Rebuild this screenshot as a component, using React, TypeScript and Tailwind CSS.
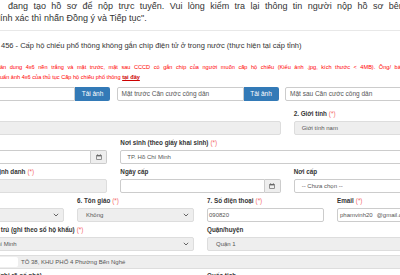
import type { ReactNode } from "react";
import clsx from "clsx";

function Req() {
  return <span className="ml-[2px] font-normal text-[#f46a6a]">(*)</span>;
}

function Label({ children, req }: { children?: ReactNode; req?: boolean }) {
  return (
    <div className="mb-[2px] h-[10px] whitespace-nowrap text-[6.3px] font-bold leading-[10px] text-[#333]">
      {children}
      {req && <Req />}
    </div>
  );
}

function Chevron() {
  return (
    <svg width="6" height="4" viewBox="0 0 6 4" className="shrink-0">
      <path d="M0.8 0.8 3 3 5.2 0.8" fill="none" stroke="#555" strokeWidth="0.9" />
    </svg>
  );
}

function Calendar() {
  return (
    <svg width="6" height="6" viewBox="0 0 6 6">
      <rect x="0.3" y="1" width="5.4" height="4.7" fill="#666" />
      <rect x="1" y="2.4" width="4" height="2.6" fill="#eee" />
      <rect x="1.3" y="0.2" width="0.8" height="1.4" fill="#666" />
      <rect x="3.9" y="0.2" width="0.8" height="1.4" fill="#666" />
    </svg>
  );
}

function Box({
  children,
  gray,
  select,
  className,
}: {
  children?: ReactNode;
  gray?: boolean;
  select?: boolean;
  className?: string;
}) {
  return (
    <div
      className={clsx(
        "flex h-[14px] items-center justify-between overflow-hidden whitespace-nowrap rounded-[2px] border text-[6px] text-[#555]",
        gray ? "border-[#ddd] bg-[#eee]" : "border-[#ccc] bg-white",
        className
      )}
    >
      <span>{children}</span>
      {select && (
        <span className="pr-[4px]">
          <Chevron />
        </span>
      )}
    </div>
  );
}

function DateBox({ gray }: { gray?: boolean }) {
  return (
    <div className="flex h-[14px]">
      <div
        className={clsx(
          "flex-1 rounded-l-[2px] border border-[#ccc]",
          gray ? "bg-[#eee]" : "bg-white"
        )}
      />
      <div className="flex w-[16px] items-center justify-center rounded-r-[2px] border border-l-0 border-[#ccc] bg-[#eee]">
        <Calendar />
      </div>
    </div>
  );
}

function Upload({ placeholder }: { placeholder?: string }) {
  return (
    <div className="flex h-[14px]">
      <div className="flex flex-1 items-center overflow-hidden whitespace-nowrap rounded-l-[2px] border border-[#ccc] bg-white pl-[4px] text-[6.5px] text-[#555]">
        {placeholder}
      </div>
      <button className="w-[35px] rounded-r-[2px] bg-[#337ab7] text-[6.5px] text-white">
        Tải ảnh
      </button>
    </div>
  );
}

export default function App() {
  return (
    <div className="h-[275px] w-[400px] overflow-hidden bg-white font-['Liberation_Sans',Arial,sans-serif] text-[#333]">
      <div className="whitespace-nowrap text-[9px] leading-[12px]">
        <div className="pl-[8px] [word-spacing:2.9px]">
          đang tạo hồ sơ để nộp trực tuyến. Vui lòng kiểm tra lại thông tin người nộp hồ sơ bên dưới
        </div>
        <div className="ml-[-9.5px]">chính xác thì nhấn Đồng ý và Tiếp tục".</div>
      </div>

      <div className="mt-[6px] border-t border-[#e8e8e8]" />

      <div className="mt-[10px] whitespace-nowrap pl-[1px] text-[7.5px] leading-[10px]">
        456 - Cấp hộ chiếu phổ thông không gắn chíp điện tử ở trong nước (thực hiện tại cấp tỉnh)
      </div>

      <div className="ml-[-6px] mt-[11px] whitespace-nowrap text-[5.6px] leading-[10px] text-[#f00]">
        <div className="[word-spacing:2px]">
          chân dung 4x6 nền trắng và mặt trước, mặt sau CCCD có gắn chip của người muốn cấp hộ chiếu (Kiểu ảnh .jpg, kích thước &lt; 4MB). Ông/ bà xem tiêu
        </div>
        <div>
          chuẩn ảnh 4x6 của thủ tục Cấp hộ chiếu phổ thông{" "}
          <a className="font-bold text-[#c00] underline">tại đây</a>
        </div>
      </div>

      <div className="ml-[-52px] mt-[5px] grid w-[499px] grid-cols-3 gap-x-[6.5px]">
        <Upload />
        <Upload placeholder="Mặt trước Căn cước công dân" />
        <Upload placeholder="Mặt sau Căn cước công dân" />
      </div>

      <div className="ml-[-53px] mt-[8px] flex w-[507px] flex-col gap-y-[3px]">
        <div className="grid grid-cols-3 gap-x-[13px]">
          <div className="col-span-2">
            <Label />
            <Box gray />
          </div>
          <div>
            <Label req>2. Giới tính</Label>
            <Box gray className="pl-[7px]">
              Giới tính nam
            </Box>
          </div>
        </div>

        <div className="grid grid-cols-3 gap-x-[13px]">
          <div>
            <Label />
            <DateBox />
          </div>
          <div className="col-span-2">
            <Label req>Nơi sinh (theo giấy khai sinh)</Label>
            <Box className="pl-[6px]">TP. Hồ Chí Minh</Box>
          </div>
        </div>

        <div className="grid grid-cols-3 gap-x-[13px]">
          <div>
            <Label req>3. Số CCCD/ Số định danh</Label>
            <Box gray />
          </div>
          <div>
            <Label>Ngày cấp</Label>
            <DateBox />
          </div>
          <div>
            <Label>Nơi cấp</Label>
            <Box className="pl-[7px]">-- Chưa chọn --</Box>
          </div>
        </div>

        <div className="grid grid-cols-4 gap-x-[13px]">
          <div>
            <Label req>5. Dân tộc</Label>
            <Box gray select className="pl-[7px]">
              Kinh
            </Box>
          </div>
          <div>
            <Label req>6. Tôn giáo</Label>
            <Box gray select className="pl-[8px]">
              Không
            </Box>
          </div>
          <div>
            <Label req>7. Số điện thoại</Label>
            <Box className="pl-[1px]">090820</Box>
          </div>
          <div>
            <Label req>Email</Label>
            <Box className="pl-[2px]">
              phamvinh20<span className="inline-block w-[4px]" />@gmail.com
            </Box>
          </div>
        </div>

        <div className="grid grid-cols-4 gap-x-[13px]">
          <div className="col-span-2">
            <Label req>8. Địa chỉ thường trú (ghi theo sổ hộ khẩu)</Label>
            <Box gray select className="pl-[5px]">
              Thành phố Hồ Chí Minh
            </Box>
          </div>
          <div className="col-span-2">
            <Label>Quận/huyện</Label>
            <Box gray select className="pl-[8px]">
              Quận 1
            </Box>
          </div>
        </div>
      </div>

      <div className="ml-[-53px] mt-[4px] w-[507px]">
        <Box gray>
          <span className="flex items-center">
            <span className="ml-[40px] mr-[3px] inline-block h-[10px] w-[30px] rounded-[2px] bg-white" />
            TỔ 38, KHU PHỐ 4 Phường Bến Nghé
          </span>
        </Box>
        <div className="mt-[2px] grid grid-cols-4 gap-x-[13px]">
          <Label>9. Địa chỉ liên hệ (ghi rõ số nhà)</Label>
          <Label />
          <Label>Quốc tịch</Label>
          <Label />
        </div>
      </div>
    </div>
  );
}
